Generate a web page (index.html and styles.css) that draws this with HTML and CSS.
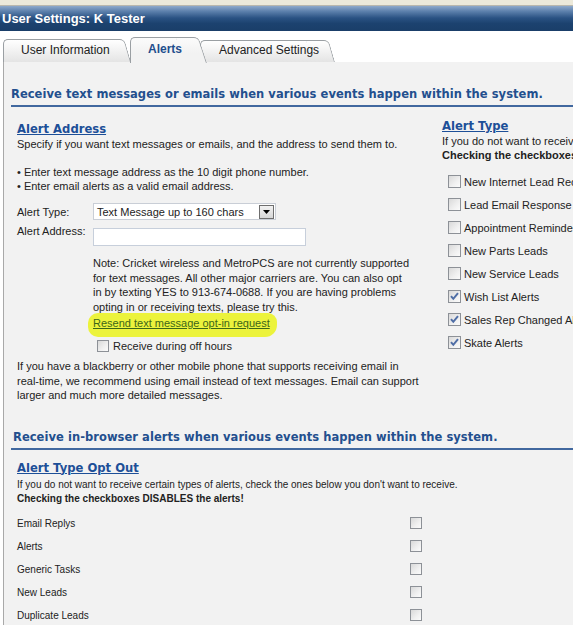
FILE: index.html
```html
<!DOCTYPE html>
<html>
<head>
<meta charset="utf-8">
<title>User Settings</title>
<link rel="stylesheet" href="styles.css">
</head>
<body>
<div class="topstrip"></div>
<div class="titlebar">User Settings: K Tester</div>
<div class="tabs">
  <div class="tab tab-user">User Information</div>
  <div class="tab tab-active">Alerts</div>
  <div class="tab tab-adv">Advanced Settings</div>
</div>
<div class="panel">
  <h2 class="section-title">Receive text messages or emails when various events happen within the system.</h2>
  <div class="cols">
    <div class="col-left">
      <h3 class="sub-title"><a href="#">Alert Address</a></h3>
      <p class="text">Specify if you want text messages or emails, and the address to send them to.</p>
      <p class="text bullets">&bull; Enter text message address as the 10 digit phone number.<br>&bull; Enter email alerts as a valid email address.</p>
      <div class="form">
        <span class="label">Alert Type:</span>
        <div class="select"><span class="select-text">Text Message up to 160 chars</span><span class="select-btn"><svg width="7" height="4" viewBox="0 0 7 4"><path d="M0 0H7L3.5 4Z" fill="#000"/></svg></span></div>
        <span class="label label-top">Alert Address:</span>
        <div class="input"></div>
        <span></span>
        <div class="field-notes">
          <p class="note">Note: Cricket wireless and MetroPCS are not currently supported<br>for text messages. All other major carriers are. You can also opt<br>in by texting YES to 913-674-0688. If you are having problems<br>opting in or receiving texts, please try this.</p>
          <div class="resend-row"><span class="highlight"><a href="#" class="resend">Resend text message opt-in request</a></span></div>
          <div class="check-row offhours"><span class="cb"></span><span>Receive during off hours</span></div>
        </div>
      </div>
      <p class="text para">If you have a blackberry or other mobile phone that supports receiving email in<br>real-time, we recommend using email instead of text messages. Email can support<br>larger and much more detailed messages.</p>
    </div>
    <div class="col-right">
      <h3 class="sub-title"><a href="#">Alert Type</a></h3>
      <p class="text">If you do not want to receive certain types of alerts, check the ones below.<br><b>Checking the checkboxes DISABLES the alerts!</b></p>
      <ul class="type-list">
        <li><span class="cb"></span>New Internet Lead Received</li>
        <li><span class="cb"></span>Lead Email Response Received</li>
        <li><span class="cb"></span>Appointment Reminders</li>
        <li><span class="cb"></span>New Parts Leads</li>
        <li><span class="cb"></span>New Service Leads</li>
        <li><span class="cb checked"><svg width="11" height="11" viewBox="0 0 11 11"><path d="M2 5.2L4.3 7.8L9 2.2" fill="none" stroke="#4f6ea6" stroke-width="2"/></svg></span>Wish List Alerts</li>
        <li><span class="cb checked"><svg width="11" height="11" viewBox="0 0 11 11"><path d="M2 5.2L4.3 7.8L9 2.2" fill="none" stroke="#4f6ea6" stroke-width="2"/></svg></span>Sales Rep Changed Alerts</li>
        <li><span class="cb checked"><svg width="11" height="11" viewBox="0 0 11 11"><path d="M2 5.2L4.3 7.8L9 2.2" fill="none" stroke="#4f6ea6" stroke-width="2"/></svg></span>Skate Alerts</li>
      </ul>
    </div>
  </div>
  <h2 class="section-title second">Receive in-browser alerts when various events happen within the system.</h2>
  <div class="optout">
    <h3 class="sub-title"><a href="#">Alert Type Opt Out</a></h3>
    <p class="small">If you do not want to receive certain types of alerts, check the ones below you don't want to receive.<br><b>Checking the checkboxes DISABLES the alerts!</b></p>
    <div class="optout-list">
      <span>Email Replys</span><span class="cb"></span>
      <span>Alerts</span><span class="cb"></span>
      <span>Generic Tasks</span><span class="cb"></span>
      <span>New Leads</span><span class="cb"></span>
      <span>Duplicate Leads</span><span class="cb"></span>
    </div>
  </div>
</div>
</body>
</html>
```
FILE: styles.css
```css
html, body {
  margin: 0;
  padding: 0;
  background: #fff;
  overflow: hidden;
}
body {
  width: 573px;
  height: 625px;
  font-family: "Liberation Sans", Arial, sans-serif;
  font-size: 11px;
  color: #222;
}
.topstrip {
  height: 5px;
  background: #ece9da;
  border-bottom: 1px solid #b9b7ad;
}
.titlebar {
  height: 25px;
  line-height: 25px;
  padding-left: 2px;
  color: #fff;
  font-weight: bold;
  font-size: 13px;
  background: linear-gradient(#8ea9cb 0%, #5b7fab 22%, #2a5283 48%, #1c426f 70%, #1a3e69 100%);
}
.tabs {
  height: 31px;
  display: flex;
  align-items: flex-end;
  padding-left: 3px;
  font-size: 12px;
}
.tab {
  position: relative;
  height: 23px;
  line-height: 23px;
  color: #222;
  box-sizing: border-box;
  z-index: 2;
}
.tab::before,
.tab::after {
  content: "";
  position: absolute;
  top: 0;
  bottom: 0;
  z-index: -1;
  border: 1px solid #9a9fa3;
  border-bottom: none;
  background: linear-gradient(#ffffff, #f3f3f3 45%, #e4e4e4);
}
.tab::before {
  left: 0;
  right: 14px;
  border-right: none;
  border-top-left-radius: 5px;
}
.tab::after {
  right: 0;
  width: 22px;
  border-left: none;
  border-top-right-radius: 5px;
  transform-origin: bottom right;
  transform: skewX(16deg);
}
.tab-user {
  width: 128px;
  padding-left: 18px;
}
.tab-active {
  width: 77px;
  height: 26px;
  line-height: 25px;
  padding-left: 18px;
  margin-left: -1px;
  margin-bottom: -1px;
  z-index: 3;
  font-weight: bold;
  color: #1f4e8d;
}
.tab-active::before,
.tab-active::after {
  background: linear-gradient(#fbfbfb, #f2f2f2 60%);
}
.tab-active::after {
  transform: skewX(18deg);
}
.tab-adv {
  width: 135px;
  height: 22px;
  line-height: 21px;
  padding-left: 19px;
  margin-left: -7px;
  z-index: 1;
}
.panel {
  margin-left: 3px;
  border-left: 1px solid #a9a9a9;
  background: #f2f2f2;
  padding: 25px 0 20px 7px;
  height: 600px;
}
.section-title {
  margin: 0;
  font-family: "DejaVu Sans", Verdana, sans-serif;
  font-size: 11.5px;
  letter-spacing: 0.05px;
  font-weight: bold;
  line-height: 14px;
  color: #234f8e;
  padding-bottom: 4px;
  border-bottom: 2px solid #41689f;
  white-space: nowrap;
}
.section-title.second {
  margin-top: 27px;
  padding-left: 2px;
}
.cols {
  display: flex;
  margin-top: 14px;
  padding-left: 6px;
}
.col-left {
  flex: none;
  width: 425px;
}
.col-right {
  flex: none;
  width: 320px;
  margin-top: -3px;
  white-space: nowrap;
}
.sub-title {
  margin: 0;
  font-family: "DejaVu Sans", Verdana, sans-serif;
  font-size: 11.6px;
  font-weight: bold;
  line-height: 16px;
}
.sub-title a {
  color: #1d4f98;
}
.text {
  margin: 0;
  line-height: 14px;
}
.bullets {
  margin-top: 14px;
}
.form {
  display: grid;
  grid-template-columns: 76px auto;
  row-gap: 8px;
  margin-top: 10px;
  justify-items: start;
}
.label {
  align-self: center;
}
.label-top {
  align-self: start;
  line-height: 14px;
  margin-top: -4px;
}
.select {
  width: 183px;
  height: 17px;
  box-sizing: border-box;
  border: 1px solid #c9ced6;
  background: #fff;
  display: flex;
  align-items: center;
  justify-content: space-between;
}
.select-text {
  padding-left: 3px;
}
.select-btn {
  width: 15px;
  height: 14px;
  box-sizing: border-box;
  margin-right: 1px;
  border: 1px solid #6e6e6e;
  background: linear-gradient(#f2f2f2, #d6d6d6);
  display: flex;
  align-items: center;
  justify-content: center;
}
.input {
  width: 213px;
  height: 18px;
  box-sizing: border-box;
  border: 1px solid #c7cfdb;
  background: #fff;
}
.field-notes {
  margin-top: 2px;
}
.note {
  margin: 0;
  line-height: 14.5px;
}
.resend-row {
  margin-top: 0;
  margin-left: -5px;
}
.highlight {
  display: inline-block;
  background: #ecf33c;
  border-radius: 10px 9px 12px 10px;
  padding: 3px 7px 7px 5px;
  margin: -1px 0;
  line-height: 14px;
}
.resend {
  color: #3c6619;
}
.check-row {
  display: flex;
  align-items: center;
  gap: 4px;
}
.offhours {
  margin-left: 4px;
  margin-top: 4px;
}
.cb {
  flex: none;
  display: inline-flex;
  align-items: center;
  justify-content: center;
  width: 13px;
  height: 13px;
  box-sizing: border-box;
  border: 1px solid #8d9197;
  background: linear-gradient(135deg, #d9d9d9, #f0f0f0 60%, #fbfbfb);
}
.offhours .cb {
  width: 12px;
  height: 12px;
}
.para {
  margin-top: 7px;
  line-height: 14.5px;
}
.col-right .text {
  margin-top: 0;
}
.type-list {
  list-style: none;
  margin: 8px 0 0 6px;
  padding: 0;
}
.type-list li {
  display: flex;
  align-items: center;
  gap: 3px;
  height: 23px;
}
.optout {
  margin-top: 10px;
  padding-left: 6px;
}
.small {
  margin: 2px 0 0;
  font-size: 10px;
  line-height: 14px;
}
.optout-list {
  display: grid;
  grid-template-columns: 393px 12px;
  grid-auto-rows: 23px;
  align-items: center;
  margin-top: 6px;
  font-size: 10px;
}
.optout-list .cb {
  width: 12px;
  height: 12px;
}
```
